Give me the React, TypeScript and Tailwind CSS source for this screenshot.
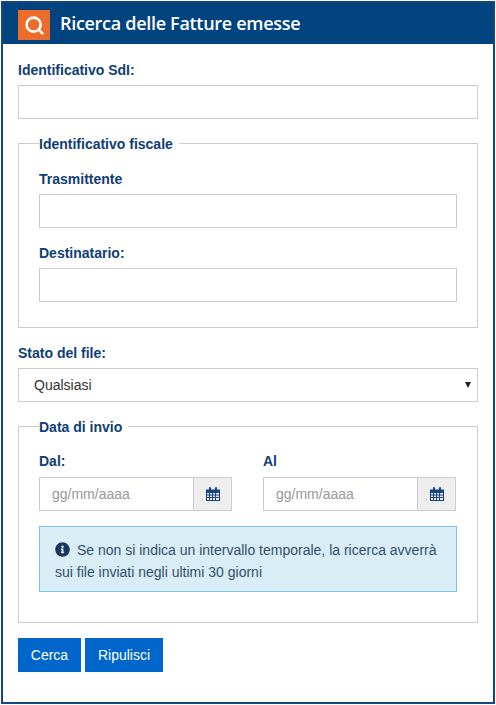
import { Search } from "lucide-react"
import { FaInfoCircle } from "react-icons/fa"

const labelClass = "block h-5 text-sm font-bold leading-5 text-[#0f3e76]"
const inputClass =
  "block h-[34px] w-full border border-[#ccc] bg-white px-3 text-sm text-[#555] outline-none"

// font awesome 4 style calendar, the packaged ones have a different grid
const CalendarIcon = () => (
  <svg width="14" height="14" viewBox="0 0 14 14" fill="#17457f">
    <path d="M0 2.5h3V1a1 1 0 0 1 2 0v1.500h4V1a1 1 0 0 1 2 0v1.500h3V14H0Z" />
    <path
      fill="#eee"
      d="M1 6h2v1.500H1ZM4 6h2v1.500H4ZM7 6h2v1.500H7ZM10 6h3v1.500h-3ZM1 8.500h2V10H1ZM4 8.500h2V10H4ZM7 8.500h2V10H7ZM10 8.500h3V10h-3ZM1 11h2v2H1ZM4 11h2v2H4ZM7 11h2v2H7ZM10 11h3v2h-3Z"
    />
  </svg>
)

const DateField = ({ label }: { label: string }) => (
  <div className="w-[193px]">
    <label className={labelClass}>{label}</label>
    <div className="mt-[6px] flex h-[34px]">
      <input
        readOnly
        placeholder="gg/mm/aaaa"
        className="h-full w-[155px] border border-[#ccc] bg-white px-3 text-sm text-[#555] outline-none placeholder:text-[#999]"
      />
      <span className="flex h-full w-[38px] items-center justify-center border border-l-0 border-[#ccc] bg-[#eee]">
        <CalendarIcon />
      </span>
    </div>
  </div>
)

export default function App() {
  return (
    <div className="h-[705px] w-[496px] bg-white pt-px pl-px font-['Liberation_Sans',sans-serif]">
      <div className="flex h-[703px] w-[494px] flex-col border-2 border-[#17457f]">
        <header className="flex h-[41px] shrink-0 items-start gap-[10px] bg-[#00437f] pl-[15px] pt-[7px]">
          <span className="flex h-[30px] w-8 items-center justify-center bg-[#ee6c2a] text-white">
            <Search size={21} strokeWidth={3} />
          </span>
          <h1 className="font-['Open_Sans',sans-serif] text-[18px] font-semibold leading-[26px] tracking-[-0.3px] text-white">
            Ricerca delle Fatture emesse
          </h1>
        </header>

        <form className="px-[15px] pt-4">
          <label className={labelClass}>Identificativo SdI:</label>
          <input readOnly className={`${inputClass} mt-[5px]`} />

          <fieldset className="mt-[15px] h-[194px] border border-[#ccc] px-5">
            <legend className="pt-[2px] text-sm font-bold leading-4 text-[#0f3e76]">
              <span className="bg-white pr-[6px]">Identificativo fiscale</span>
            </legend>
            <label className={`${labelClass} mt-[17px]`}>Trasmittente</label>
            <input readOnly className={`${inputClass} mt-[5px]`} />
            <label className={`${labelClass} mt-[15px]`}>Destinatario:</label>
            <input readOnly className={`${inputClass} mt-[5px]`} />
          </fieldset>

          <label className={`${labelClass} mt-[15px]`}>Stato del file:</label>
          <div className="relative mt-[5px] flex h-[34px] items-center border border-[#ccc] bg-white pl-[15px] text-sm text-[#333]">
            Qualsiasi
            <span className="absolute right-[6px] top-[13px] h-0 w-0 border-x-[3px] border-t-[6px] border-x-transparent border-t-[#222]" />
          </div>

          <fieldset className="mt-[15px] h-[206px] border border-[#ccc] px-5">
            <legend className="pt-[2px] text-sm font-bold leading-4 text-[#0f3e76]">
              <span className="bg-white pr-[6px]">Data di invio</span>
            </legend>
            <div className="mt-4 flex gap-[31px]">
              <DateField label="Dal:" />
              <DateField label="Al" />
            </div>
            <div className="mt-[15px] h-[66px] border border-[#7fc4e0] bg-[#d9edf7] px-[15px] pb-[10px] pt-3 text-sm leading-[22px] text-[#31506b]">
              <FaInfoCircle className="mr-[7px] inline-block align-[-2px] text-[15px] text-[#17375e]" />
              Se non si indica un intervallo temporale, la ricerca avverrà sui file inviati negli ultimi 30 giorni
            </div>
          </fieldset>

          <div className="mt-[15px] flex gap-1">
            <button type="button" className="h-[34px] w-[63px] bg-[#0066cc] text-sm text-white">
              Cerca
            </button>
            <button type="button" className="h-[34px] w-[78px] bg-[#0066cc] text-sm text-white">
              Ripulisci
            </button>
          </div>
        </form>
      </div>
    </div>
  )
}
